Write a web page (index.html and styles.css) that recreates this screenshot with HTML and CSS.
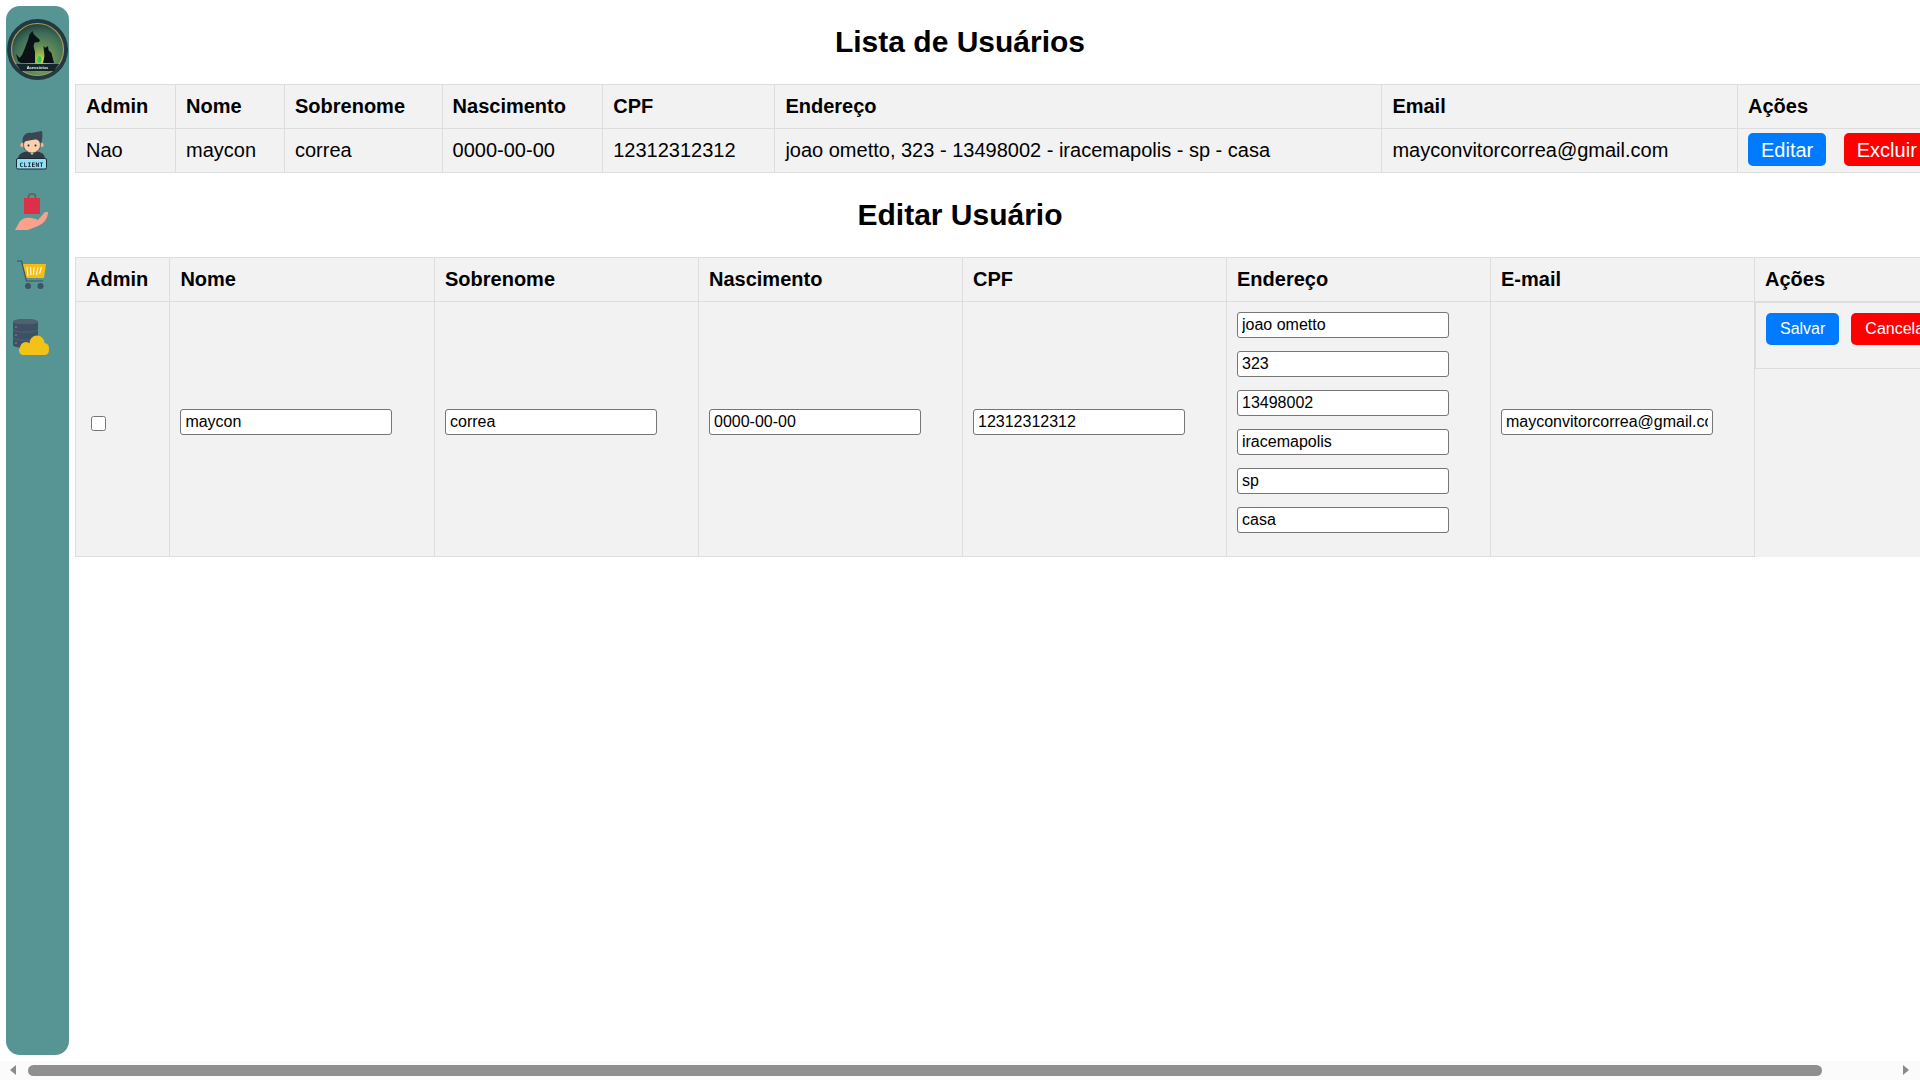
FILE: index.html
```html
<!DOCTYPE html>
<html lang="pt-BR">
<head>
<meta charset="utf-8">
<title>Lista de Usuários</title>
<link rel="stylesheet" href="styles.css">
</head>
<body>
<aside class="sidebar">
  <svg class="logo" viewBox="0 0 61 61" width="61" height="61">
    <defs>
      <radialGradient id="glow" cx="0.56" cy="0.7" r="0.7">
        <stop offset="0" stop-color="#e8e04a"/>
        <stop offset="0.14" stop-color="#9cbc48"/>
        <stop offset="0.4" stop-color="#5f8c58"/>
        <stop offset="0.75" stop-color="#3d6c58"/>
        <stop offset="1" stop-color="#20403a"/>
      </radialGradient>
    </defs>
    <circle cx="30.5" cy="30.5" r="30.5" fill="#213a42"/>
    <circle cx="30.5" cy="30.5" r="26" fill="url(#glow)" stroke="#b09a55" stroke-width="1.2"/>
    <path d="M25.500 12 L26.500 15 L28 16.500 L33 21 L32 23 L27.500 23.500 L26.500 27 L28 33 L28 44 L14 44 L11 42 L9 35 L12.500 39 L15 36 L18 29 L21 21 L22.500 15.500 Z" fill="#0a1215"/>
    <path d="M36.500 27 L38.500 28.800 L41 27 L41.500 31 L44.500 34 L47 44 L36 44 L37.500 37 L37 32 Z" fill="#0a1215"/>
    <ellipse cx="32.500" cy="40.500" rx="2.200" ry="3.500" fill="#36c060"/>
    <path d="M9 45 H52 L47 52 H14 Z" fill="#12262b"/>
    <text x="30.5" y="49.800" class="logo-text" text-anchor="middle">Acessórios</text>
  </svg>
  <nav class="side-nav">
    <svg class="side-icon" viewBox="0 0 40 40">
      <path d="M6 29 C6 23 13 21 20 21 C27 21 33 23 33 29 Z" fill="#2f3a45"/>
      <path d="M16 20 L24 20 L20 25 Z" fill="#f3f3f3"/>
      <circle cx="10.500" cy="15" r="2.200" fill="#f2b48e"/>
      <circle cx="29.500" cy="15" r="2.200" fill="#f2b48e"/>
      <ellipse cx="20" cy="15" rx="8.500" ry="8" fill="#fbd0ad" stroke="#1f2a33" stroke-width="0.6"/>
      <path d="M11 14 C9 6 14 2 19 3 L30 1 C31 6 30 10 29 14 C27 9 24 9 20 10 C16 11 13 10 11 14 Z" fill="#3b4650"/>
      <circle cx="16.500" cy="15.500" r="1" fill="#1f2a33"/>
      <circle cx="23.500" cy="15.500" r="1" fill="#1f2a33"/>
      <rect x="4.500" y="28.500" width="30" height="10.500" rx="1.500" fill="#8fe0f5" stroke="#1b2a35"/>
      <text x="19.500" y="36.600" class="client-text" text-anchor="middle">CLIENT</text>
    </svg>
    <svg class="side-icon" viewBox="0 0 40 40">
      <path d="M16.500 7 V3.500 C16.500 0 23.500 0 23.500 3.500 V7" fill="none" stroke="#5d6468" stroke-width="1.800"/>
      <path d="M12 5 H28 V21 H12 Z" fill="#dc3049"/>
      <path d="M3 37 L8 28 C11 25 15 24 19 25 L24 26 C27 27 26 31 22 31 L18 31 L25 28 L33 19 L36 19 C36 26 31 31 26 33 L16 37 Z" fill="#fba08a"/>
    </svg>
    <svg class="side-icon" viewBox="0 0 40 40">
      <path d="M5 5 H9.500 L14.500 25 H31" fill="none" stroke="#3f5360" stroke-width="1.200"/>
      <path d="M11 8 H34 L32 22 H14.500 Z" fill="#f5bd13"/>
      <path d="M15 11 L16 20 M18.500 11 L19 19 M22 11 L21.500 19 M26 11 L24.500 19 M29.500 11 L27.500 18" stroke="#fff7d8" stroke-width="1.200" fill="none"/>
      <circle cx="16" cy="30" r="3" fill="#3f5360"/>
      <circle cx="28.500" cy="30" r="3" fill="#3f5360"/>
    </svg>
    <svg class="side-icon" viewBox="0 0 40 40">
      <path d="M1 3 C1 -1 26 -1 26 3 V26 C26 30 1 30 1 26 Z" fill="#3d5164"/>
      <path d="M1 3 C1 6 26 6 26 3 C26 -1 1 -1 1 3 Z" fill="#4e6270"/>
      <path d="M1 11 C6 14 21 14 26 11 M1 19 C6 22 21 22 26 19" fill="none" stroke="#54677a" stroke-width="0.800"/>
      <circle cx="4" cy="8" r="0.800" fill="#d8708a"/>
      <circle cx="4" cy="16" r="0.800" fill="#d8708a"/>
      <circle cx="4" cy="24" r="0.800" fill="#d8708a"/>
      <g fill="#f2c218">
        <rect x="7" y="27" width="30" height="9" rx="4.500"/>
        <circle cx="25" cy="24" r="7.500"/>
        <circle cx="14" cy="29" r="6"/>
        <circle cx="32" cy="29" r="5"/>
      </g>
    </svg>
  </nav>
</aside>

<div class="viewport">
  <main class="content">
    <h2 class="title">Lista de Usuários</h2>
    <table class="grid grid-list">
      <colgroup>
        <col class="l1"><col class="l2"><col class="l3"><col class="l4"><col class="l5"><col class="l6"><col class="l7"><col class="l8">
      </colgroup>
      <thead>
        <tr><th>Admin</th><th>Nome</th><th>Sobrenome</th><th>Nascimento</th><th>CPF</th><th>Endereço</th><th>Email</th><th>Ações</th></tr>
      </thead>
      <tbody>
        <tr>
          <td>Nao</td><td>maycon</td><td>correa</td><td>0000-00-00</td><td>12312312312</td>
          <td>joao ometto, 323 - 13498002 - iracemapolis - sp - casa</td>
          <td>mayconvitorcorrea@gmail.com</td>
          <td><a class="link-btn blue" href="#">Editar</a> <a class="link-btn red" href="#">Excluir</a></td>
        </tr>
      </tbody>
    </table>

    <h2 class="title">Editar Usuário</h2>
    <table class="grid grid-edit">
      <colgroup>
        <col class="e1"><col class="e2a"><col class="e2"><col class="e2"><col class="e2"><col class="e2"><col class="e2"><col class="e8">
      </colgroup>
      <thead>
        <tr><th>Admin</th><th>Nome</th><th>Sobrenome</th><th>Nascimento</th><th>CPF</th><th>Endereço</th><th>E-mail</th><th>Ações</th></tr>
      </thead>
      <tbody>
        <tr>
          <td><input class="check" type="checkbox"></td>
          <td><input class="field single" type="text" value="maycon"></td>
          <td><input class="field single" type="text" value="correa"></td>
          <td><input class="field single" type="text" value="0000-00-00"></td>
          <td><input class="field single" type="text" value="12312312312"></td>
          <td>
            <input class="field" type="text" value="joao ometto">
            <input class="field" type="text" value="323">
            <input class="field" type="text" value="13498002">
            <input class="field" type="text" value="iracemapolis">
            <input class="field" type="text" value="sp">
            <input class="field" type="text" value="casa">
          </td>
          <td><input class="field single" type="text" value="mayconvitorcorrea@gmail.com"></td>
          <td class="actions">
            <button class="btn blue" type="button">Salvar</button>
            <button class="btn red" type="button">Cancelar</button>
          </td>
        </tr>
      </tbody>
    </table>
  </main>
</div>

<div class="scrollbar">
  <span class="arrow arrow-left"></span>
  <span class="thumb"></span>
  <span class="arrow arrow-right"></span>
</div>
</body>
</html>
```

FILE: styles.css
```css
* { box-sizing: border-box; }

html, body { margin: 0; height: 100%; }

body {
  display: flex;
  flex-direction: column;
  height: 100vh;
  overflow: hidden;
  background: #fff;
  color: #000;
  font-family: "Liberation Sans", Arial, sans-serif;
}

.sidebar {
  position: fixed;
  left: 6px;
  top: 6px;
  bottom: 25px;
  width: 63px;
  padding: 13px 1px 0;
  background: #569593;
  border-radius: 14px;
}

.logo { display: block; }

.logo-text {
  font: bold 4px "Liberation Sans", Arial, sans-serif;
  fill: #f4f4e6;
}

.side-nav {
  display: flex;
  flex-direction: column;
  gap: 23px;
  margin-top: 50px;
  padding-left: 5px;
}

.side-icon {
  display: block;
  width: 40px;
  height: 40px;
  overflow: visible;
}

.client-text {
  font: bold 6.2px "DejaVu Sans Mono", "Liberation Mono", monospace;
  fill: #10202b;
  letter-spacing: 0.3px;
}

.viewport {
  flex: 1;
  min-height: 0;
  overflow: hidden;
}

.title {
  margin: 25px 0;
  font-size: 30px;
  line-height: 34px;
  font-weight: bold;
  text-align: center;
}

.grid {
  margin-left: 75px;
  border-collapse: collapse;
  table-layout: fixed;
  background: #f2f2f2;
  font-size: 20px;
  line-height: 23px;
}

.grid-list { width: 1867px; }
.grid-edit { width: 1870px; }

.l1 { width: 100px; }
.l2 { width: 109px; }
.l3 { width: 157.600px; }
.l4 { width: 160.600px; }
.l5 { width: 172.200px; }
.l6 { width: 607px; }
.l7 { width: 355.600px; }
.l8 { width: 205px; }

.e1 { width: 94.400px; }
.e2a { width: 264.600px; }
.e2 { width: 264px; }
.e8 { width: 191px; }

.grid th, .grid td {
  padding: 10px;
  border: 1px solid #ddd;
  text-align: left;
  white-space: nowrap;
}

.grid th { font-weight: bold; }

.link-btn {
  margin-right: 12px;
  padding: 6px 13px 5px;
  border-radius: 5px;
  color: #fff;
  text-decoration: none;
}

.blue { background: #007bff; }
.red { background: #f00; }

.field {
  display: block;
  width: 212px;
  height: 26px;
  margin: 0 0 13px;
  padding: 0 4px;
  border: 1px solid #767676;
  border-radius: 3px;
  background: #fff;
  color: #000;
  font: 16px "Liberation Sans", Arial, sans-serif;
}

.field.single { margin-bottom: 14px; }

.check {
  display: block;
  width: 15px;
  height: 15px;
  margin: 0 0 11px 5px;
}

.grid td.actions {
  display: flex;
}

.btn {
  flex: none;
  height: 32px;
  margin: 0 12px 13px 0;
  padding: 0 14px;
  border: 0;
  border-radius: 5px;
  color: #fff;
  font: 16px "Liberation Sans", Arial, sans-serif;
}

.scrollbar {
  flex: none;
  display: flex;
  align-items: flex-start;
  height: 19px;
  padding: 4px 11px 0 10px;
  background: #fbfbfb;
}

.thumb {
  width: 1794px;
  height: 11px;
  margin: 0 auto 0 12px;
  border-radius: 6px;
  background: #8f8f8f;
}

.arrow {
  width: 0;
  height: 0;
  border-top: 5.500px solid transparent;
  border-bottom: 5.500px solid transparent;
}

.arrow-left { border-right: 6px solid #8a8a8a; }
.arrow-right { border-left: 6px solid #8a8a8a; }
```
